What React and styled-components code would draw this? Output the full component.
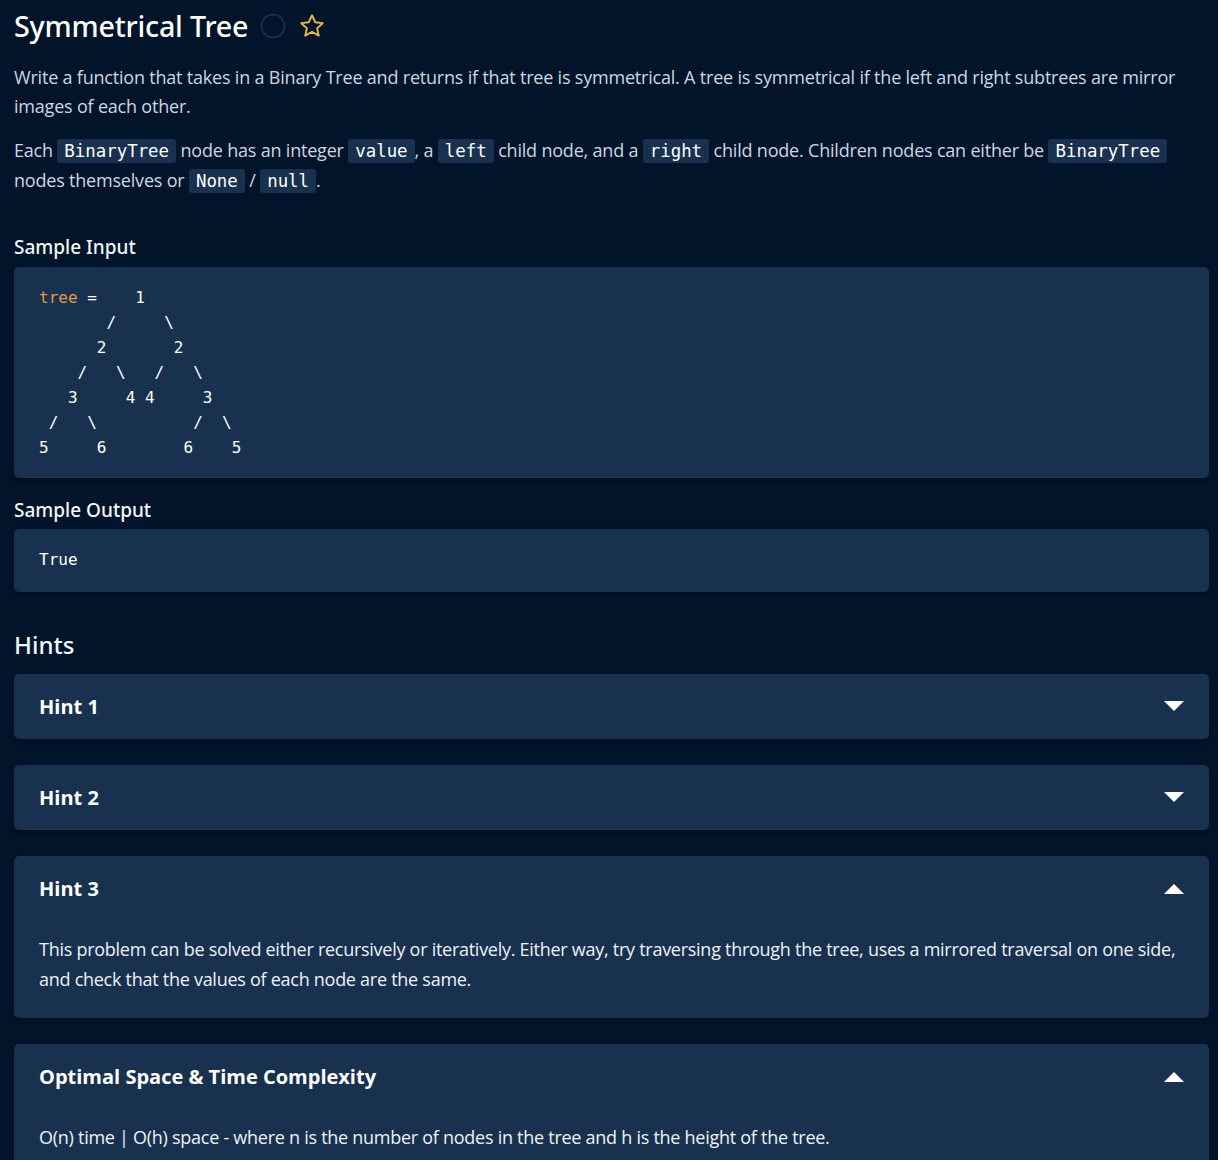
import React from "react";
import styled, { createGlobalStyle } from "styled-components";

const GlobalStyle = createGlobalStyle`
    html, body {
        margin: 0;
        padding: 0;
        background: #011429;
    }
    body {
        font-family: "Open Sans", "Noto Sans", sans-serif;
        color: #d3dbe5;
    }
`;

const Page = styled.div`
    width: 1195px;
    padding: 3px 0 40px 14px;
`;

const TitleRow = styled.div`
    display: flex;
    align-items: center;
    gap: 12px;
    height: 44px;
    h1 {
        margin: 0;
        font-family: "Noto Sans", sans-serif;
        font-weight: 500;
        font-size: 28.7px;
        color: #ffffff;
        letter-spacing: -0.2px;
    }
`;

const Icons = styled.div`
    display: flex;
    align-items: center;
    gap: 12px;
    margin-top: 2px;
`;

const Para = styled.p`
    margin: ${(p) => p.$margin || "0"};
    font-size: 18px;
    line-height: ${(p) => p.$lh || "29px"};
    letter-spacing: -0.2px;
    color: #cdd6e1;
`;

const Code = styled.code`
    font-family: "DejaVu Sans Mono", monospace;
    font-size: 17.4px;
    line-height: 1;
    letter-spacing: 0;
    color: #ffffff;
    background: #18314f;
    border-radius: 3px;
    padding: 2px 7px;
`;

const SectionTitle = styled.h3`
    margin: ${(p) => p.$margin || "0"};
    font-family: "Noto Sans", sans-serif;
    font-weight: 500;
    font-size: ${(p) => p.$size || "19px"};
    line-height: 1;
    color: #f3f6fa;
`;

const CodeBox = styled.pre`
    margin: 0;
    background: #18314f;
    border-radius: 5px;
    padding: ${(p) => p.$pad || "18px 25px"};
    font-family: "DejaVu Sans Mono", monospace;
    font-size: 16px;
    line-height: 25px;
    color: #ffffff;
    box-shadow: 0 2px 4px rgba(0, 0, 0, 0.35);
    span {
        color: #e6974a;
    }
`;

const HintList = styled.div`
    display: flex;
    flex-direction: column;
    gap: 26px;
    margin-top: 17px;
`;

const Card = styled.div`
    background: #18314f;
    border-radius: 5px;
    box-shadow: 0 2px 4px rgba(0, 0, 0, 0.35);
`;

const CardHead = styled.div`
    display: flex;
    align-items: center;
    justify-content: space-between;
    height: 65px;
    padding: 0 25px;
    font-family: "Open Sans", sans-serif;
    font-weight: 700;
    font-size: 20px;
    color: #ffffff;
`;

const CardBody = styled.div`
    padding: 13px 25px 24px;
    font-size: 18px;
    line-height: 30px;
    letter-spacing: -0.27px;
    color: #eef2f7;
`;

const Caret = ({ up }) => (
    <svg width="20" height="11" viewBox="0 0 20 11">
        <path d={up ? "M0 11 L10 1 L20 11 Z" : "M0 0 L20 0 L10 10 Z"} fill="#ffffff" />
    </svg>
);

const Hint = ({ title, open, children }) => (
    <Card>
        <CardHead>
            <span>{title}</span>
            <Caret up={open} />
        </CardHead>
        {open && <CardBody>{children}</CardBody>}
    </Card>
);

const tree = `   1
       /     \\
      2       2
    /   \\   /   \\
   3     4 4     3
 /   \\          /  \\
5     6        6    5`;

const App = () => {
    return (
        <Page>
            <GlobalStyle />
            <TitleRow>
                <h1>Symmetrical Tree</h1>
                <Icons>
                    <svg width="26" height="26" viewBox="0 0 26 26">
                        <circle cx="13" cy="13" r="11.5" fill="none" stroke="#22305f" strokeWidth="1.5" />
                    </svg>
                    <svg width="28" height="28" viewBox="0 0 24 24">
                        <path
                            d="M12 2.8l2.8 6 6.5.7-4.9 4.4 1.4 6.4L12 17l-5.8 3.3 1.4-6.4-4.9-4.4 6.5-.7z"
                            fill="none"
                            stroke="#e9b949"
                            strokeWidth="1.6"
                            strokeLinejoin="round"
                        />
                    </svg>
                </Icons>
            </TitleRow>
            <Para $margin="16px 0 0">
                Write a function that takes in a Binary Tree and returns if that tree is symmetrical. A tree is
                symmetrical if the left and right subtrees are mirror images of each other.
            </Para>
            <Para $margin="14px 0 0" $lh="30px">
                Each <Code>BinaryTree</Code> node has an integer <Code>value</Code>, a <Code>left</Code> child
                node, and a <Code>right</Code> child node. Children nodes can either be <Code>BinaryTree</Code>{" "}
                nodes themselves or <Code>None</Code> / <Code>null</Code>.
            </Para>
            <SectionTitle $margin="43px 0 10px">Sample Input</SectionTitle>
            <CodeBox>
                <span>tree</span> = {tree}
            </CodeBox>
            <SectionTitle $margin="23px 0 9px">Sample Output</SectionTitle>
            <CodeBox $pad="18px 25px 20px">True</CodeBox>
            <SectionTitle $size="24px" $margin="41px 0 0">
                Hints
            </SectionTitle>
            <HintList>
                <Hint title="Hint 1" />
                <Hint title="Hint 2" />
                <Hint title="Hint 3" open>
                    This problem can be solved either recursively or iteratively. Either way, try traversing through
                    the tree, uses a mirrored traversal on one side, and check that the values of each node are the
                    same.
                </Hint>
                <Hint title="Optimal Space &amp; Time Complexity" open>
                    O(n) time | O(h) space - where n is the number of nodes in the tree and h is the height of the
                    tree.
                </Hint>
            </HintList>
        </Page>
    );
};

export default App;
